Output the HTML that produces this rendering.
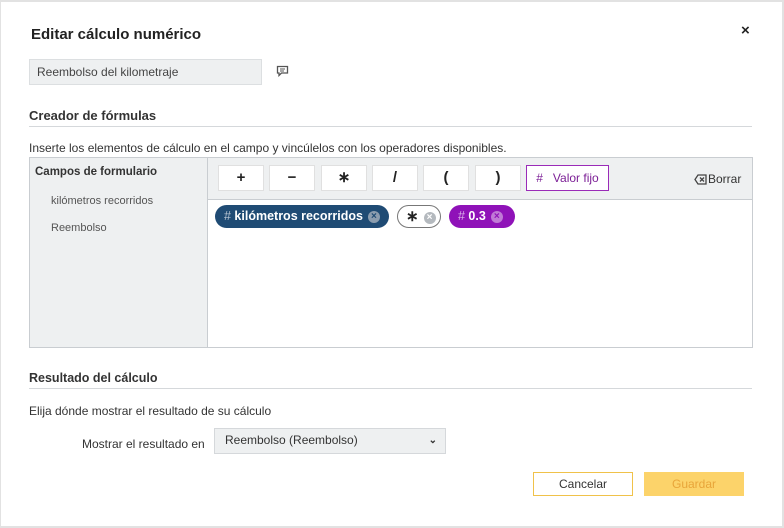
<!DOCTYPE html>
<html><head><meta charset="utf-8"><style>
*{box-sizing:border-box;margin:0;padding:0}
body{width:784px;height:528px;position:relative;background:#fff;font-family:"Liberation Sans",sans-serif;color:#333;overflow:hidden}
.frame{position:absolute;left:0;top:0;width:784px;height:528px;border:2px solid #e2e2e2;border-left-width:1px}
.a{position:absolute;white-space:nowrap}
.btn{position:absolute;top:165px;height:26px;width:46px;background:#fff;border:1px solid #e0e0e0;font-weight:bold;font-size:15px;text-align:center;line-height:24px;color:#222}
.chip{position:absolute;top:205px;height:23px;border-radius:12px;font-size:12.5px;font-weight:bold;line-height:23px;padding-left:9px}
.x{display:inline-block;width:12px;height:12px;border-radius:50%;background:#b4b9be;color:#fff;font-size:10px;line-height:12px;text-align:center;vertical-align:1px;margin-left:5px}
</style></head><body>
<div class="frame"></div>
<div class="a" style="left:31px;top:26px;font-size:15px;font-weight:bold;color:#222">Editar cálculo numérico</div>
<div class="a" style="left:741px;top:22px;font-size:15px;font-weight:bold;color:#222">×</div>
<div class="a" style="left:29px;top:59px;width:233px;height:26px;background:#eef0f1;border:1px solid #dcdfe1;font-size:12px;line-height:24px;padding-left:7px;color:#444">Reembolso del kilometraje</div>
<svg class="a" style="left:276px;top:65px" width="13" height="12" viewBox="0 0 13 12"><path d="M1.5 1.5h10v6.5h-6l-2.5 2.5v-2.5h-1.5z" fill="none" stroke="#555" stroke-width="1.3"/><path d="M4 4h5M4 6h4" stroke="#555" stroke-width="1"/></svg>
<div class="a" style="left:29px;top:108px;font-size:13px;font-weight:bold;color:#333">Creador de fórmulas</div>
<div class="a" style="left:29px;top:126px;width:723px;height:1px;background:#d5d8db"></div>
<div class="a" style="left:29px;top:141px;font-size:12px;color:#333">Inserte los elementos de cálculo en el campo y vincúlelos con los operadores disponibles.</div>
<div class="a" style="left:29px;top:157px;width:724px;height:191px;border:1px solid #c9cdd1"></div>
<div class="a" style="left:30px;top:158px;width:178px;height:189px;background:#eef0f1;border-right:1px solid #c9cdd1"></div>
<div class="a" style="left:35px;top:166px;font-size:11.5px;font-weight:bold;color:#333">Campos de formulario</div>
<div class="a" style="left:51px;top:195px;font-size:11px;color:#555">kilómetros recorridos</div>
<div class="a" style="left:51px;top:222px;font-size:11px;color:#555">Reembolso</div>
<div class="a" style="left:208px;top:158px;width:544px;height:42px;background:#eef0f1;border-bottom:1px solid #c9cdd1"></div>
<div class="btn" style="left:218px">+</div>
<div class="btn" style="left:269px">−</div>
<div class="btn" style="left:321px">∗</div>
<div class="btn" style="left:372px">/</div>
<div class="btn" style="left:423px">(</div>
<div class="btn" style="left:475px">)</div>
<div class="btn" style="left:526px;width:83px;border-color:#9a2bb8;color:#7c1f96;font-weight:normal;font-size:12px">#&nbsp;&nbsp; Valor fijo</div>
<svg class="a" style="left:694px;top:174px" width="13" height="11" viewBox="0 0 13 11"><path d="M4 1h8v9h-8l-3-4.5z" fill="none" stroke="#444" stroke-width="1.3"/><path d="M6 3.5l4 4M10 3.5l-4 4" stroke="#444" stroke-width="1.3"/></svg>
<div class="a" style="left:708px;top:172px;font-size:12px;color:#333">Borrar</div>
<div class="chip" style="left:215px;width:174px;background:#1f4b74;color:#fff"><span style="color:#b9c6d4;font-weight:normal">#</span> kilómetros recorridos<span class="x" style="background:#8b9cae;color:#1f4b74">×</span></div>
<div class="chip" style="left:397px;width:44px;background:#fff;border:1px solid #777;color:#222;line-height:21px;padding-left:8px;font-size:15px">∗<span class="x" style="font-size:10px">×</span></div>
<div class="chip" style="left:449px;width:66px;background:#8f12b8;color:#fff"><span style="color:#dcb3ea;font-weight:normal">#</span> 0.3<span class="x" style="background:#c07ad6;color:#8f12b8">×</span></div>
<div class="a" style="left:29px;top:371px;font-size:12.5px;font-weight:bold;color:#333">Resultado del cálculo</div>
<div class="a" style="left:29px;top:388px;width:723px;height:1px;background:#d5d8db"></div>
<div class="a" style="left:29px;top:404px;font-size:12px;color:#333">Elija dónde mostrar el resultado de su cálculo</div>
<div class="a" style="left:82px;top:437px;font-size:12px;color:#333">Mostrar el resultado en</div>
<div class="a" style="left:214px;top:428px;width:232px;height:26px;background:#eef0f1;border:1px solid #d5d8db;font-size:12px;line-height:23px;padding-left:10px;color:#333">Reembolso (Reembolso)<span style="position:absolute;right:8px;top:0;font-size:10px;font-weight:bold">⌄</span></div>
<div class="a" style="left:533px;top:472px;width:100px;height:24px;border:1px solid #f0c24a;font-size:12px;text-align:center;line-height:22px;color:#333">Cancelar</div>
<div class="a" style="left:644px;top:472px;width:100px;height:24px;background:#fcd36a;font-size:12px;text-align:center;line-height:24px;color:#e8a53a">Guardar</div>
</body></html>
